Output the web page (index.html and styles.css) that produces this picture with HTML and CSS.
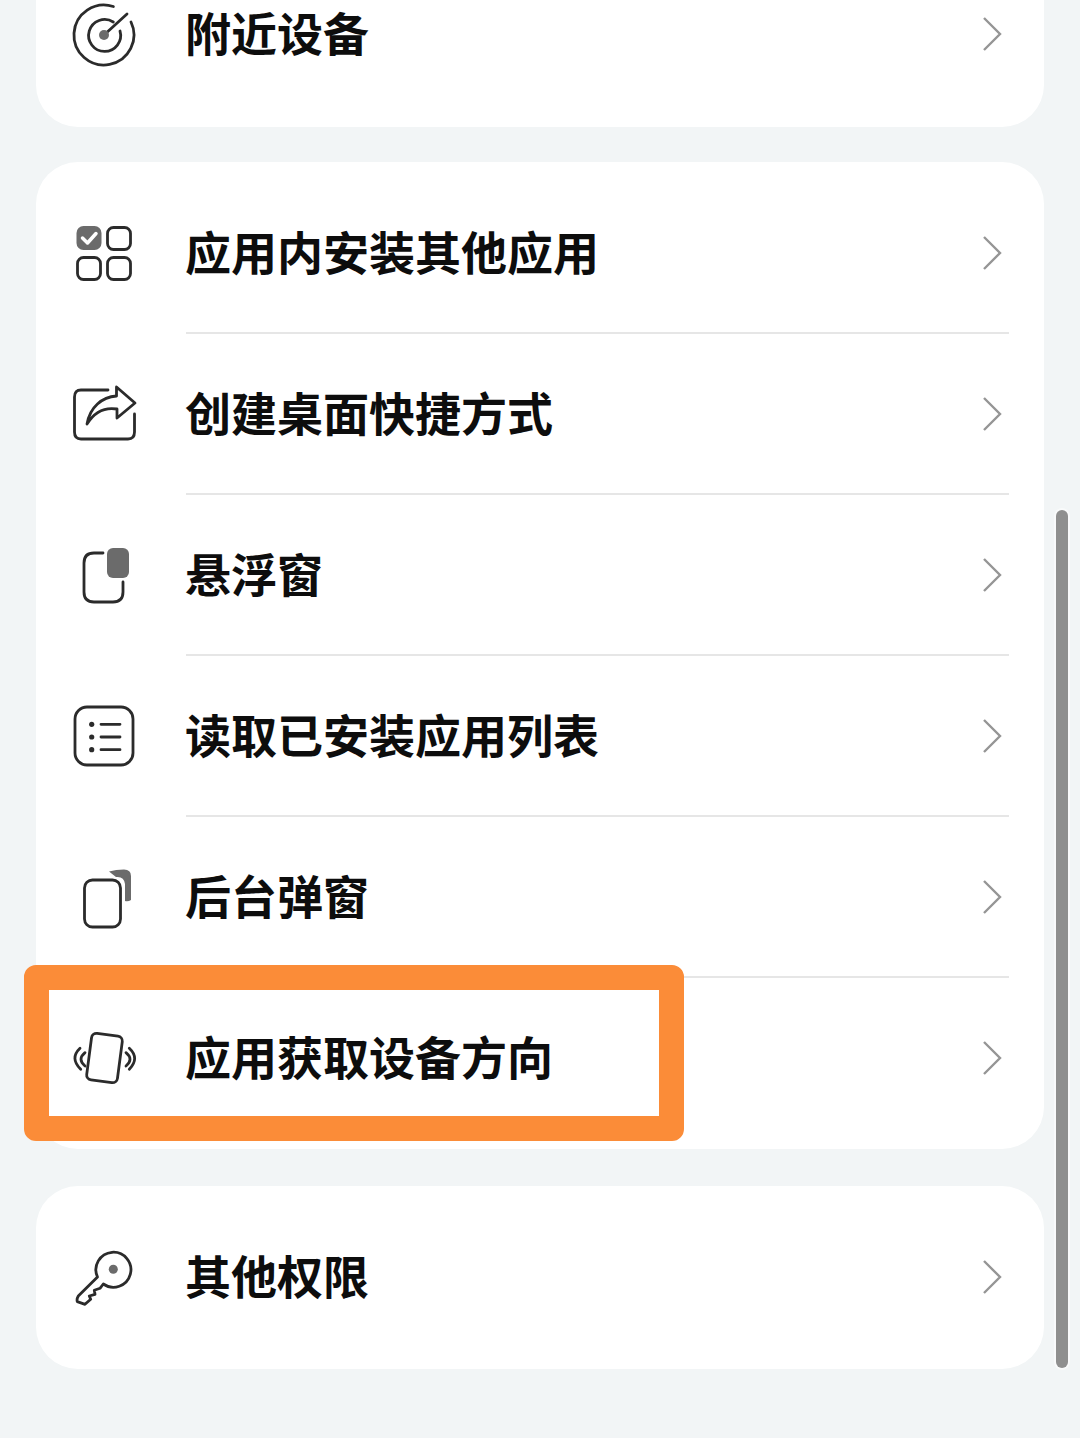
FILE: index.html
```html
<!DOCTYPE html>
<html lang="zh">
<head>
<meta charset="utf-8"/>
<title>权限设置</title>
<link rel="stylesheet" href="styles.css">
</head>
<body>
<main class="list">

  <section class="card card-first">
    <div class="row">
      <svg class="icon" viewBox="0 0 68 68">
        <path d="M43.4 5.5A30 30 0 1 0 61 21"/>
        <path d="M43.3 21A16 16 0 1 0 50 30"/>
        <path d="M34 34L57 13"/>
        <circle class="solid" cx="34" cy="34" r="5"/>
      </svg>
      <div class="row-body last"><span class="label">附近设备</span>
        <svg class="chevron" viewBox="0 0 20 36"><path d="M2 2L18 18L2 34"/></svg></div>
    </div>
  </section>

  <section class="card card-middle">
    <div class="row">
      <svg class="icon" viewBox="0 0 68 68">
        <rect class="solid" x="6.5" y="6" width="25" height="24" rx="7"/>
        <path class="tick" d="M12.5 18L17.5 23L26 13.5"/>
        <rect x="37.5" y="7.5" width="23" height="22" rx="6"/>
        <rect x="7.5" y="37.5" width="23" height="22" rx="6"/>
        <rect x="37.5" y="37.5" width="23" height="22" rx="6"/>
      </svg>
      <div class="row-body"><span class="label">应用内安装其他应用</span>
        <svg class="chevron" viewBox="0 0 20 36"><path d="M2 2L18 18L2 34"/></svg></div>
    </div>
    <div class="row">
      <svg class="icon" viewBox="0 0 68 68">
        <path d="M38 9H11Q4.500 9 4.500 16V51Q4.500 58 11 58H58Q64.500 58 64.500 51V33"/>
        <path d="M17 43C20 26 32 16 46.5 15V6L65 22L47 37V28C35 26 25 30 17 43Z"/>
      </svg>
      <div class="row-body"><span class="label">创建桌面快捷方式</span>
        <svg class="chevron" viewBox="0 0 20 36"><path d="M2 2L18 18L2 34"/></svg></div>
    </div>
    <div class="row">
      <svg class="icon" viewBox="0 0 68 68">
        <path d="M33 11H24Q14 11 14 21V50Q14 60 24 60H43Q53 60 53 50V40"/>
        <rect class="solid" x="37" y="6" width="22" height="30" rx="6"/>
      </svg>
      <div class="row-body"><span class="label">悬浮窗</span>
        <svg class="chevron" viewBox="0 0 20 36"><path d="M2 2L18 18L2 34"/></svg></div>
    </div>
    <div class="row">
      <svg class="icon" viewBox="0 0 68 68">
        <rect x="5" y="4" width="58" height="58" rx="12"/>
        <circle class="solid dark" cx="21.7" cy="21.3" r="2.6"/>
        <circle class="solid dark" cx="21.7" cy="34" r="2.6"/>
        <circle class="solid dark" cx="21.7" cy="46.7" r="2.6"/>
        <path d="M31 21.3H50M31 34H50M31 46.7H50"/>
      </svg>
      <div class="row-body"><span class="label">读取已安装应用列表</span>
        <svg class="chevron" viewBox="0 0 20 36"><path d="M2 2L18 18L2 34"/></svg></div>
    </div>
    <div class="row">
      <svg class="icon" viewBox="0 0 68 68">
        <rect x="14.5" y="16" width="36" height="47" rx="8"/>
        <path class="solid" d="M39 7.5Q46 5.5 54 5.5Q61 5.5 61 12V36Q58 38 55 37V20Q54 12 46 13Z"/>
      </svg>
      <div class="row-body"><span class="label">后台弹窗</span>
        <svg class="chevron" viewBox="0 0 20 36"><path d="M2 2L18 18L2 34"/></svg></div>
    </div>
    <div class="row">
      <svg class="icon" viewBox="0 0 68 68">
        <rect x="19" y="9.5" width="31" height="47" rx="5" transform="rotate(7.5 34.5 33)"/>
        <path d="M10 23.3Q-0.5 33.3 10.7 44.3M15 27.7Q7 34.3 15 41"/>
        <path d="M59.3 23.3Q70 33.3 59.3 44.3M56 27.7Q64 34.3 56 41"/>
      </svg>
      <div class="row-body last"><span class="label">应用获取设备方向</span>
        <svg class="chevron" viewBox="0 0 20 36"><path d="M2 2L18 18L2 34"/></svg></div>
    </div>
  </section>

  <section class="card">
    <div class="row">
      <svg class="icon" viewBox="0 0 68 68">
        <path d="M33.3 40A17.5 17.5 0 1 0 27.5 33L8.3 52Q6.5 55 7.3 57.7L15 60.3L20.7 55.3L19.3 52L25 50.3L24.3 46.3L30 44.3Z"/>
        <circle class="solid" cx="43.3" cy="25.3" r="4.5"/>
      </svg>
      <div class="row-body last"><span class="label">其他权限</span>
        <svg class="chevron" viewBox="0 0 20 36"><path d="M2 2L18 18L2 34"/></svg></div>
    </div>
  </section>

</main>

<div class="highlight"></div>
<div class="scrollbar"></div>
</body>
</html>
```

FILE: styles.css
```css
html, body {
   margin: 0;
   height: 100%;
   overflow: hidden;
   background-color: #f2f5f6;
}

body {
   position: relative;
   font-family: "Liberation Sans", "Noto Sans CJK SC", sans-serif;
}

.list {
   display: flex;
   flex-direction: column;
   gap: 37px;
   margin: -57px 36px 0;
}

.card {
   background-color: #fff;
   border-radius: 42px;
   padding: 11px 0;
}

.card-first {
   margin-bottom: -2px;
   padding-bottom: 12px;
}

.card-middle {
   padding-bottom: 10px;
}

.row {
   display: flex;
   align-items: center;
   gap: 48px;
   height: 161px;
   padding-left: 34px;
}

.row-body {
   flex: 1;
   align-self: stretch;
   display: flex;
   align-items: center;
   justify-content: space-between;
   margin-right: 35px;
   padding-right: 7px;
   border-bottom: 2px solid #e6e6e6;
}

.row-body.last {
   border-bottom-color: transparent;
}

.label {
   margin: 0 0 6px -1px;
   font-size: 46px;
   font-weight: 700;
   color: #0d0d0d;
}

.icon {
   flex: none;
   width: 68px;
   height: 68px;
   overflow: visible;
   fill: none;
   stroke: #2b2b2b;
   stroke-width: 2.8;
   stroke-linecap: round;
   stroke-linejoin: round;
}

.icon .solid {
   fill: #6b6b6b;
   stroke: none;
}

.icon .dark {
   fill: #2b2b2b;
}

.icon .tick {
   stroke: #fff;
   stroke-width: 3.5;
}

.chevron {
   flex: none;
   width: 20px;
   height: 36px;
   fill: none;
   stroke: #959595;
   stroke-width: 2.4;
}

.highlight {
   position: absolute;
   left: 24px;
   top: 965px;
   width: 660px;
   height: 176px;
   box-sizing: border-box;
   border: 25px solid #fb8c38;
   border-radius: 12px;
}

.scrollbar {
   position: absolute;
   left: 1056px;
   top: 510px;
   width: 12px;
   height: 858px;
   border-radius: 6px;
   background-color: #8f8f8f;
   box-shadow: 0 0 0 2px rgba(255, 255, 255, 0.5);
}
```
